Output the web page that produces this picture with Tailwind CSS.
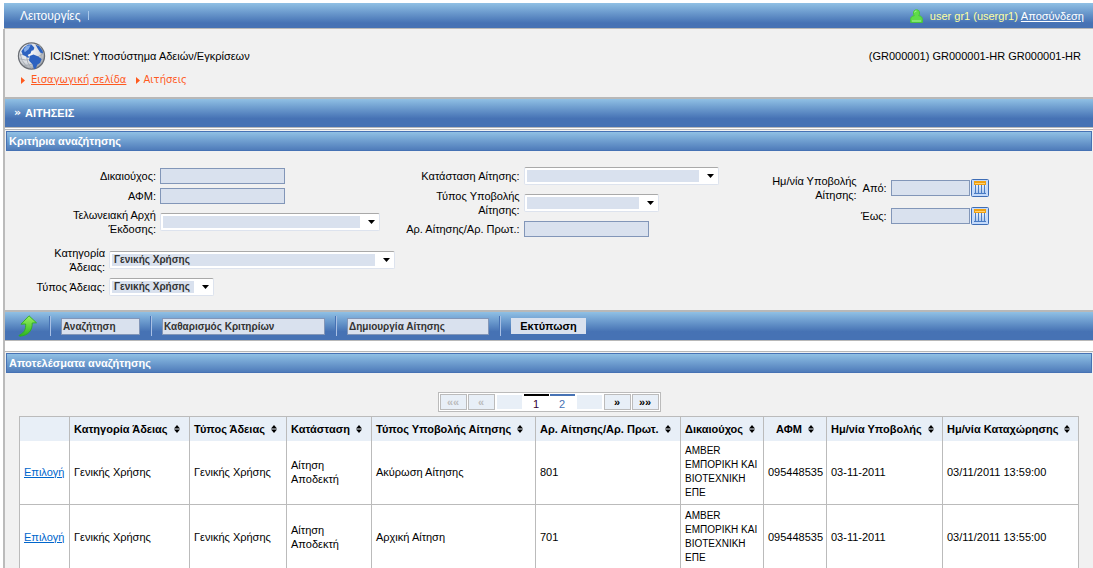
<!DOCTYPE html>
<html lang="el">
<head>
<meta charset="utf-8">
<title>ICISnet</title>
<script src="https://cdn.jsdelivr.net/npm/@tailwindcss/browser@4"></script>
</head>
<body class="bg-white font-['Liberation_Sans',Arial,sans-serif] text-[11px] leading-[14px] text-black">
<svg class="absolute size-0">
  <defs>
    <linearGradient id="leaf" x1="0" y1="0" x2="0" y2="1"><stop offset="0" stop-color="#9cf25e"/><stop offset="1" stop-color="#2bb51e"/></linearGradient>
    <linearGradient id="cell" x1="0" y1="0" x2="0" y2="1"><stop offset="0" stop-color="#fff"/><stop offset="1" stop-color="#a9c5ec"/></linearGradient>
    <radialGradient id="globe" cx=".4" cy=".35" r=".7"><stop offset="0" stop-color="#fff"/><stop offset=".6" stop-color="#d8dbe0"/><stop offset="1" stop-color="#90959c"/></radialGradient>
  </defs>
  <symbol id="cal" viewBox="0 0 18 18">
    <rect x=".5" y=".5" width="17" height="17" rx="1" fill="#c4dafa" stroke="#3e6db5"/>
    <rect x="3" y="3" width="12" height="12" fill="url(#cell)"/>
    <path d="M4.500 6v8M7.500 6v8M10.500 6v8M13.500 6v8M3 14.500h12" stroke="#4a7cc4" fill="none"/>
    <rect x="3" y="2" width="12" height="4" fill="#f0a010"/><path d="M4 4.500h10" stroke="#ffd070"/>
  </symbol>
  <symbol id="sort" viewBox="0 0 6 8"><path d="M3 0l3 3.500H0zM3 8l3-3.500H0z"/></symbol>
  <symbol id="tri" viewBox="0 0 4 7"><path d="M0 0l4 3.500L0 7z" fill="#ff5a1e"/></symbol>
  <symbol id="drop" viewBox="0 0 7 4"><path d="M0 0h7L3.500 4z"/></symbol>
</svg>

<header class="mt-[3px] ml-1 flex h-[26px] items-center justify-between border-b border-[#b8b8b8] bg-linear-to-b from-[#90c0e4] to-[#4672b4] to-80% pr-[9px] pl-4 text-white">
  <nav class="flex items-center gap-2"><a href="#" class="text-[12px]">Λειτουργίες</a><span class="h-[9px] w-px bg-[#a9c8ea]"></span></nav>
  <div class="flex items-center gap-[3px]">
    <svg class="mr-1 h-[14px] w-[13px]" viewBox="0 0 13 14"><path d="M3.500 4C3.500 2 4.500.8 6.500.8s3 1.200 3 3.200c0 1.300-.3 2-.8 2.700 2.300.2 3.700 1.400 3.700 3.700v3H.6v-3c0-2.300 1.400-3.500 3.700-3.700-.5-.7-.8-1.400-.8-2.700z" fill="#5fdc48" stroke="#48c838"/><path d="M2 12h9M4.500 3.500q0-1.500 2-1.500" stroke="#a8f598" fill="none"/></svg>
    <span class="text-[#ffffa0]">user gr1 (usergr1)</span>
    <a href="#" class="underline">Αποσύνδεση</a>
  </div>
</header>

<main class="ml-[3px] border-l-2 border-[#bbb] bg-[#f1f1f1]">
  <section class="flex h-[68px] items-start justify-between pt-3 pr-3 pl-3">
    <div>
      <div class="flex items-center gap-1">
        <svg class="h-[30px] w-[29px]" viewBox="0 0 30 30"><circle cx="15" cy="15" r="13.500" fill="url(#globe)" stroke="#6a6e74" stroke-width="1.300"/><path d="M3 18q11 4 25-6M7 25q12-1 20-7M10 16Q10 22 15 28M23 3q5 10-1 22M3 12q1 8 7 14M2.500 14l7-1" fill="none" stroke="#a3a8b0" stroke-width=".9"/><path d="M4.500 10l3-4 4-3h3.500l3 3.500-1 2.500-2 .5-1 3-3 1.500 1.500 2-1 1-3-2-2.500-1zM13 15l4-1.500 5 2 3.500 2.500-1.500 4-3 2-1.500 4-2 .5-1.500-5-3.500-3.500zM19 3l4 2 3.500 4.500.5 3-3-1-2.500-4z" fill="#2d62c0"/><path d="M7 8l3-3.500 4-.5-2 4-4 3z" fill="#86aee8"/></svg>
        <h1>ICISnet: Υποσύστημα Αδειών/Εγκρίσεων</h1>
      </div>
      <nav class="ml-1 flex items-center pt-[2px] font-['DejaVu_Sans',Verdana,sans-serif] text-[10px] text-[#ff5a1e]">
        <svg class="mr-[6px] h-[7px] w-1"><use href="#tri"/></svg><a href="#" class="underline">Εισαγωγική σελίδα</a><svg class="mr-[3px] ml-[10px] h-[7px] w-1"><use href="#tri"/></svg><span>Αιτήσεις</span>
      </nav>
    </div>
    <p class="pt-2">(GR000001) GR000001-HR GR000001-HR</p>
  </section>

  <h2 class="flex h-[31px] items-center gap-1 border-t-2 border-b border-[#b8b8b8] bg-linear-to-b from-[#90c0e4] to-[#4672b4] to-70% pl-[9px] font-bold text-white"><span class="font-['DejaVu_Sans',sans-serif]">»</span>ΑΙΤΗΣΕΙΣ</h2>

  <section class="border-t border-white">
    <div class="border-t border-[#b8b8b8] px-px pt-px">
      <h3 class="h-5 border border-[#4672b4] bg-linear-to-b from-[#90c0e4] to-[#4f7cba] pt-[2px] pl-[2px] font-bold text-white">Κριτήρια αναζήτησης</h3>
    </div>
    <form id="criteria" class="flex h-[159px]">
      <div class="w-[36%] max-w-[396px] shrink-0 pt-[17px]">
        <div class="grid grid-cols-[151px_auto] items-center justify-start gap-1">
          <label for="f1" class="text-right">Δικαιούχος:</label><input id="f1" class="h-4 w-[125px] border border-[#8296b8] bg-[#d9e1ee] px-1">
          <label for="f2" class="text-right">ΑΦΜ:</label><input id="f2" class="h-4 w-[125px] border border-[#8296b8] bg-[#d9e1ee] px-1">
          <label for="f3" class="text-right">Τελωνειακή Αρχή<br>Έκδοσης:</label>
          <div class="flex h-[18px] w-[220px] items-center rounded-xs border border-[#dde3ee] border-t-[#a9a9a9] bg-white pr-1 pl-[2px]"><select id="f3" class="h-3 flex-1 appearance-none bg-[#d9e1ee]"><option></option></select><svg class="ml-2 h-1 w-[7px]"><use href="#drop"/></svg></div>
        </div>
        <div class="mt-[10px] grid grid-cols-[100px_auto] items-center justify-start gap-x-1 gap-y-1">
          <label for="f4" class="text-right">Κατηγορία<br>Άδειας:</label>
          <div class="flex h-[18px] w-[286px] items-center rounded-xs border border-[#dde3ee] border-t-[#a9a9a9] bg-white pr-1 pl-[2px]"><select id="f4" class="h-3 flex-1 appearance-none bg-[#d9e1ee] pl-[2px] text-[10px] leading-3 font-bold text-[#333]"><option>Γενικής Χρήσης</option></select><svg class="ml-2 h-1 w-[7px]"><use href="#drop"/></svg></div>
          <label for="f5" class="text-right">Τύπος Άδειας:</label>
          <div class="flex h-[18px] w-[105px] items-center rounded-xs border border-[#dde3ee] border-t-[#a9a9a9] bg-white pr-1 pl-[2px]"><select id="f5" class="h-3 min-w-0 flex-1 appearance-none bg-[#d9e1ee] pl-[2px] text-[10px] leading-3 font-bold text-[#333]"><option>Γενικής Χρήσης</option></select><svg class="ml-2 h-1 w-[7px] shrink-0"><use href="#drop"/></svg></div>
        </div>
      </div>
      <div class="grid w-[340px] shrink-0 grid-cols-[123px_auto] content-start items-center justify-start gap-1 pt-4">
        <label for="f6" class="text-right">Κατάσταση Αίτησης:</label>
        <div class="flex h-[18px] w-[195px] items-center rounded-xs border border-[#dde3ee] border-t-[#a9a9a9] bg-white pr-1 pl-[2px]"><select id="f6" class="h-3 flex-1 appearance-none bg-[#d9e1ee]"><option></option></select><svg class="ml-2 h-1 w-[7px]"><use href="#drop"/></svg></div>
        <label for="f7" class="text-right">Τύπος Υποβολής<br>Αίτησης:</label>
        <div class="flex h-[18px] w-[135px] items-center rounded-xs border border-[#dde3ee] border-t-[#a9a9a9] bg-white pr-1 pl-[2px]"><select id="f7" class="h-3 flex-1 appearance-none bg-[#d9e1ee]"><option></option></select><svg class="ml-2 h-1 w-[7px]"><use href="#drop"/></svg></div>
        <label for="f8" class="text-right whitespace-nowrap">Αρ. Αίτησης/Αρ. Πρωτ.:</label><input id="f8" class="h-4 w-[125px] border border-[#8296b8] bg-[#d9e1ee] px-1">
      </div>
      <fieldset class="grid grid-cols-[120px_26px_79px_18px] content-start items-center gap-x-1 gap-y-[5px] pt-[23px]">
        <span class="text-right">Ημ/νία Υποβολής<br>Αίτησης:</span>
        <label for="f9" class="text-right">Από:</label><input id="f9" class="h-4 w-full border border-[#8296b8] bg-[#d9e1ee] px-1"><button type="button" aria-label="Από" class="-ml-[3px] size-[18px]"><svg class="size-[18px]"><use href="#cal"/></svg></button>
        <label for="f10" class="col-start-2 text-right">Έως:</label><input id="f10" class="h-4 w-full border border-[#8296b8] bg-[#d9e1ee] px-1"><button type="button" aria-label="Έως" class="-ml-[3px] size-[18px]"><svg class="size-[18px]"><use href="#cal"/></svg></button>
      </fieldset>
    </form>
    <div class="flex h-[31px] items-center border-t-2 border-b border-[#b8b8b8] bg-linear-to-b from-[#90c0e4] to-[#4672b4] to-70% pl-3">
      <button aria-label="Πίσω" class="mr-[11px]"><svg class="h-[22px] w-[21px]" viewBox="0 0 21 22"><path d="M12 .8l7.500 7-4.300.2c.3 7-3.500 12.500-12.200 13.200-1 0-1.300-.7-.4-1.200 5-2.500 6.400-6 6-11L4 9.200z" fill="url(#leaf)" stroke="#2fae22" stroke-width=".9"/></svg></button>
      <span class="h-5 w-[2px] border-r border-[#a9c0e4] bg-[#4672b4]"></span>
      <button class="mx-[10px] h-[17px] w-[79px] border border-[#8296b8] bg-[#d9e1ee] pl-px text-left text-[10px] leading-[15px] font-bold text-[#333]">Αναζήτηση</button>
      <span class="h-5 w-[2px] border-r border-[#a9c0e4] bg-[#4672b4]"></span>
      <button class="mx-[10px] h-[17px] w-[163px] border border-[#8296b8] bg-[#d9e1ee] pl-px text-left text-[10px] leading-[15px] font-bold text-[#333]">Καθαρισμός Κριτηρίων</button>
      <span class="h-5 w-[2px] border-r border-[#a9c0e4] bg-[#4672b4]"></span>
      <button class="mx-[10px] h-[17px] w-[142px] border border-[#8296b8] bg-[#d9e1ee] pl-px text-left text-[10px] leading-[15px] font-bold text-[#333]">Δημιουργία Αίτησης</button>
      <span class="h-5 w-[2px] border-r border-[#a9c0e4] bg-[#4672b4]"></span>
      <button class="mx-[10px] h-4 w-[75px] bg-[#d9e1ee] leading-4 font-bold">Εκτύπωση</button>
    </div>
  </section>

  <section class="border-t-[10px] border-white">
    <div class="border-t border-[#b8b8b8] px-px pt-px">
      <h3 class="h-5 border border-[#4672b4] bg-linear-to-b from-[#90c0e4] to-[#4f7cba] pt-[2px] pl-[2px] font-bold text-white">Αποτελέσματα αναζήτησης</h3>
    </div>
    <nav class="mx-auto mt-[19px] flex h-5 w-[223px] items-center gap-px border border-[#bbb] bg-white px-px font-bold">
      <button disabled class="h-4 w-[27px] border border-[#bbb] bg-[#e8eff7] leading-[14px] text-[#bbb]">««</button>
      <button disabled class="h-4 w-[27px] border border-[#bbb] bg-[#e8eff7] leading-[14px] text-[#bbb]">«</button>
      <span class="mx-px h-[14px] w-[25px] bg-[#e8eff7]"></span>
      <button class="h-4 w-[25px] border-t-2 border-black leading-4 font-normal text-[#303]">1</button>
      <button class="h-4 w-[25px] border-t-2 border-[#4672b4] leading-4 font-normal text-[#4672b4]">2</button>
      <span class="mx-px h-[14px] w-[25px] bg-[#e8eff7]"></span>
      <button class="h-4 w-[27px] border border-[#bbb] bg-[#e8eff7] leading-[14px]">»</button>
      <button class="h-4 w-[27px] border border-[#bbb] bg-[#e8eff7] leading-[14px]">»»</button>
    </nav>
    <div class="mt-1 px-[14px]">
      <table class="w-full table-fixed border-collapse border border-[#bbb] bg-white text-left [&_td]:border [&_td]:border-[#bbb] [&_td]:pl-1 [&_th]:border-x [&_th]:border-[#bbb] [&_th]:px-1 [&_th]:whitespace-nowrap [&_th_svg]:ml-[3px] [&_th_svg]:inline [&_th_svg]:h-2 [&_th_svg]:w-[6px] [&_th_svg]:align-[0px] [&_tbody_tr:first-child_td]:border-t-0">
        <colgroup><col class="w-[50px]"><col class="w-[120px]"><col class="w-[97px]"><col class="w-[85px]"><col class="w-[164px]"><col class="w-[145px]"><col class="w-[83px]"><col class="w-[63px]"><col class="w-[116px]"><col class="w-[136px]"></colgroup>
        <thead><tr class="h-6 bg-[#e8eff7]">
          <th></th>
          <th>Κατηγορία Άδειας <svg><use href="#sort"/></svg></th>
          <th>Τύπος Άδειας <svg><use href="#sort"/></svg></th>
          <th>Κατάσταση <svg><use href="#sort"/></svg></th>
          <th>Τύπος Υποβολής Αίτησης <svg><use href="#sort"/></svg></th>
          <th>Αρ. Αίτησης/Αρ. Πρωτ. <svg><use href="#sort"/></svg></th>
          <th>Δικαιούχος <svg><use href="#sort"/></svg></th>
          <th class="text-center">ΑΦΜ <svg><use href="#sort"/></svg></th>
          <th>Ημ/νία Υποβολής <svg><use href="#sort"/></svg></th>
          <th>Ημ/νία Καταχώρησης <svg><use href="#sort"/></svg></th>
        </tr></thead>
        <tbody>
          <tr class="h-16"><td><a href="#" class="text-[#0066cc] underline">Επιλογή</a></td><td>Γενικής Χρήσης</td><td>Γενικής Χρήσης</td><td>Αίτηση<br>Αποδεκτή</td><td>Ακύρωση Αίτησης</td><td>801</td><td class="text-[10px] whitespace-nowrap">AMBER<br>ΕΜΠΟΡΙΚΗ ΚΑΙ<br>ΒΙΟΤΕΧΝΙΚΗ<br>ΕΠΕ</td><td>095448535</td><td>03-11-2011</td><td>03/11/2011 13:59:00</td></tr>
          <tr class="h-16"><td><a href="#" class="text-[#0066cc] underline">Επιλογή</a></td><td>Γενικής Χρήσης</td><td>Γενικής Χρήσης</td><td>Αίτηση<br>Αποδεκτή</td><td>Αρχική Αίτηση</td><td>701</td><td class="text-[10px] whitespace-nowrap">AMBER<br>ΕΜΠΟΡΙΚΗ ΚΑΙ<br>ΒΙΟΤΕΧΝΙΚΗ<br>ΕΠΕ</td><td>095448535</td><td>03-11-2011</td><td>03/11/2011 13:55:00</td></tr>
        </tbody>
      </table>
    </div>
  </section>
</main>
</body>
</html>
